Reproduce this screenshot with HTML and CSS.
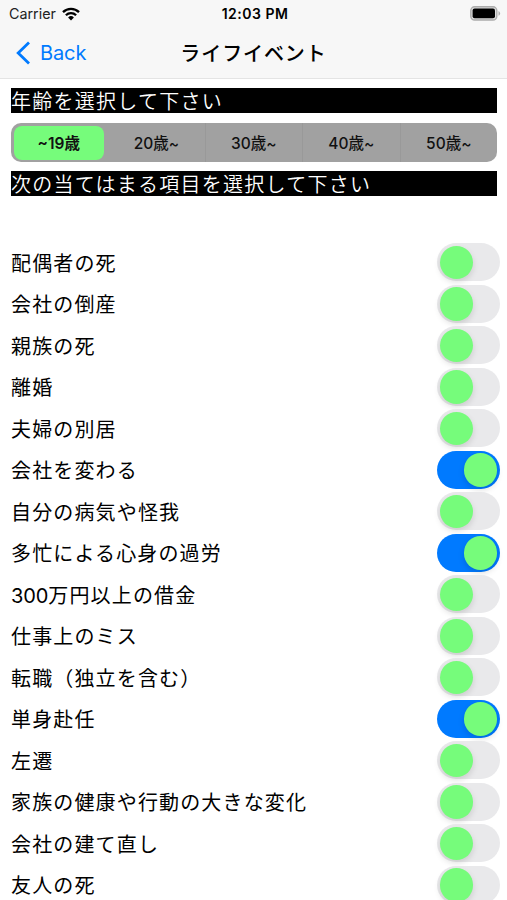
FILE: index.html
```
<!DOCTYPE html>
<html lang="ja">
<head>
  <meta charset="UTF-8" />
  <meta name="viewport" content="width=device-width, initial-scale=1.0"/>
  <title>ライフイベント</title>
  <link rel="stylesheet" href="styles.css">
</head>
<body>
  <header>
    <div class="status-bar">
      <div class="carrier">
        <span>Carrier</span>
        <svg class="wifi" width="18" height="14" viewBox="0 0 18 14">
          <g fill="none" stroke="#000" stroke-width="2.3">
            <path d="M1 5.1a11.3 11.3 0 0 1 16 0"/>
            <path d="M3.9 8.2a7.2 7.2 0 0 1 10.2 0"/>
          </g>
          <path d="M9 13.4L6.1 10.5a4.1 4.1 0 0 1 5.8 0z"/>
        </svg>
      </div>
      <div class="time">12:03 PM</div>
      <div class="battery">
        <svg width="31" height="15" viewBox="0 0 31 15">
          <rect x="0.8" y="0.8" width="26" height="13.2" rx="3.8" fill="#ddd" stroke="#acacac" stroke-width="1.4"/>
          <rect x="2.6" y="2.6" width="22.4" height="9.6" rx="2"/>
          <path d="M28.5 5v4.8a2.6 2.6 0 0 0 0-4.8z" fill="#acacac"/>
        </svg>
      </div>
    </div>
    <nav class="nav-bar">
      <a class="back">
        <svg width="15" height="24" viewBox="0 0 15 24">
          <path d="M13 1.5L2.2 12L13 22.5" fill="none" stroke="#007aff" stroke-width="2.8"/>
        </svg>
        <span>Back</span>
      </a>
      <h1>ライフイベント</h1>
    </nav>
  </header>

  <main>
    <h2>年齢を選択して下さい</h2>
    <div class="segments">
      <button class="selected">~19歳</button>
      <button>20歳~</button>
      <button>30歳~</button>
      <button>40歳~</button>
      <button>50歳~</button>
    </div>
    <h2>次の当てはまる項目を選択して下さい</h2>

    <ul class="events">
      <li><span>配偶者の死</span><button class="switch"></button></li>
      <li><span>会社の倒産</span><button class="switch"></button></li>
      <li><span>親族の死</span><button class="switch"></button></li>
      <li><span>離婚</span><button class="switch"></button></li>
      <li><span>夫婦の別居</span><button class="switch"></button></li>
      <li><span>会社を変わる</span><button class="switch on"></button></li>
      <li><span>自分の病気や怪我</span><button class="switch"></button></li>
      <li><span>多忙による心身の過労</span><button class="switch on"></button></li>
      <li><span><span class="num">300</span>万円以上の借金</span><button class="switch"></button></li>
      <li><span>仕事上のミス</span><button class="switch"></button></li>
      <li><span>転職（独立を含む）</span><button class="switch"></button></li>
      <li><span>単身赴任</span><button class="switch on"></button></li>
      <li><span>左遷</span><button class="switch"></button></li>
      <li><span>家族の健康や行動の大きな変化</span><button class="switch"></button></li>
      <li><span>会社の建て直し</span><button class="switch"></button></li>
      <li><span>友人の死</span><button class="switch"></button></li>
    </ul>
  </main>

  <script>
    document.querySelectorAll('.switch').forEach(sw => {
      sw.addEventListener('click', () => sw.classList.toggle('on'));
    });

    const segments = document.querySelectorAll('.segments button');
    segments.forEach(seg => {
      seg.addEventListener('click', () => {
        segments.forEach(s => s.classList.remove('selected'));
        seg.classList.add('selected');
      });
    });
  </script>
</body>
</html>
```
FILE: styles.css
```
* {
  box-sizing: border-box;
}

body {
  margin: 0;
  height: 100vh;
  overflow: hidden;
  background: #fff;
  color: #000;
  font-family: Inter, "Noto Sans CJK JP", sans-serif;
}

button {
  border: none;
  padding: 0;
  font-family: inherit;
  color: inherit;
  cursor: pointer;
}

header {
  height: 79px;
  background: #f7f7f7;
  border-bottom: 1px solid #e4e4e4;
}

.status-bar {
  display: grid;
  grid-template-columns: 1fr auto 1fr;
  align-items: center;
  height: 27px;
  padding: 0 6px 0 9px;
  font-size: 14.3px;
}

.carrier {
  display: flex;
  align-items: center;
  gap: 6px;
  color: #222;
}

.time {
  font-weight: 600;
  font-size: 14px;
  letter-spacing: 0.5px;
}

.battery {
  display: flex;
  justify-content: flex-end;
}

.nav-bar {
  display: grid;
  grid-template-columns: 1fr auto 1fr;
  align-items: center;
  height: 51px;
  padding: 0 16px;
}

.back {
  display: flex;
  align-items: center;
  gap: 9px;
  color: #007aff;
  font-size: 20px;
  letter-spacing: -0.1px;
}

h1 {
  margin: 0;
  font-size: 20px;
  font-weight: 500;
  letter-spacing: 0.9px;
}

main {
  padding: 9px 10px 0 11px;
}

h2 {
  margin: 0;
  height: 25px;
  padding-top: 1px;
  line-height: 26px;
  background: #000;
  color: #fff;
  font-size: 20px;
  font-weight: 350;
  letter-spacing: 1.25px;
}

.segments {
  display: flex;
  height: 39px;
  margin: 10px 0 9px;
  border-radius: 10px;
  background: #a1a1a1;
}

.segments button {
  flex: 1;
  background: none;
  padding-bottom: 1px;
  font-size: 15.5px;
  font-weight: 500;
  color: #111;
}

.segments button + button + button {
  border-left: 1px solid #999;
}

.segments .selected {
  flex: 0 0 90.5px;
  margin: 2.5px 4.2px 2.5px 2.5px;
  border-radius: 8px;
  background: #76fc7b;
  font-weight: 600;
}

.events {
  list-style: none;
  margin: 45.5px 0 0;
  padding: 0;
}

.events li {
  display: flex;
  align-items: center;
  justify-content: space-between;
  height: 41.53px;
  margin-right: -2.5px;
  font-size: 20px;
  letter-spacing: 1.15px;
}

.num {
  letter-spacing: -0.1px;
}

.switch {
  width: 62.5px;
  height: 38px;
  padding: 2.5px;
  border-radius: 19px;
  background: #e9e9eb;
  display: flex;
  align-items: center;
}

.switch::before {
  content: "";
  width: 33.5px;
  height: 33.5px;
  border-radius: 50%;
  background: #76fc7b;
  box-shadow: 0 3px 6px rgba(0, 0, 0, 0.13);
}

.switch.on {
  background: #007aff;
  justify-content: flex-end;
}
```
